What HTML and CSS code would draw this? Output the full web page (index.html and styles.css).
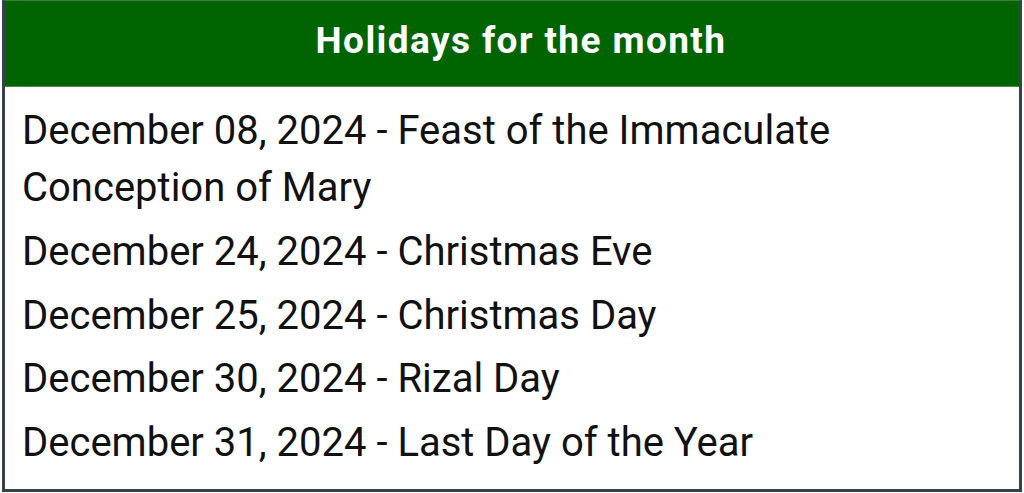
FILE: index.html
```html
<!DOCTYPE html>
<html>
<head>
<meta charset="utf-8">
<link rel="stylesheet" href="styles.css">
</head>
<body>
<div class="card">
  <div class="card-header">Holidays for the month</div>
  <ul class="holiday-list">
    <li>December 08, 2024 - Feast of the Immaculate Conception of Mary</li>
    <li>December 24, 2024 - Christmas Eve</li>
    <li>December 25, 2024 - Christmas Day</li>
    <li>December 30, 2024 - Rizal Day</li>
    <li>December 31, 2024 - Last Day of the Year</li>
  </ul>
</div>
</body>
</html>
```

FILE: styles.css
```css
html, body {
  margin: 0;
  padding: 0;
  background: #ffffff;
}
body {
  padding: 0 2px;
  font-family: Roboto, "Liberation Sans", sans-serif;
}
.card {
  box-sizing: border-box;
  width: 1020px;
  height: 492px;
  border: 3px solid #35414f;
  border-top: 1px solid #3f7a3f;
  display: flex;
  flex-direction: column;
}
.card-header {
  background: #006400;
  color: #ffffff;
  font-weight: 700;
  font-size: 37px;
  letter-spacing: 1.4px;
  height: 86px;
  display: flex;
  align-items: center;
  justify-content: center;
  padding: 0 0 6px 18px;
  box-sizing: border-box;
  border-bottom: 1px solid #4c8a4c;
}
.holiday-list {
  list-style: none;
  margin: 0;
  padding: 15px 20px 0 17px;
  display: flex;
  flex-direction: column;
  gap: 6.75px;
  font-size: 40px;
  line-height: 57px;
  color: #111111;
}
.holiday-list li {
  margin: 0;
}
```
